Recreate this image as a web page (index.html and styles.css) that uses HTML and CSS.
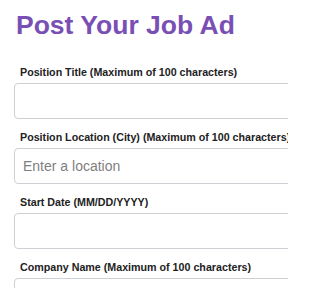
FILE: index.html
```html
<!DOCTYPE html>
<html>
<head>
<meta charset="utf-8">
<link rel="stylesheet" href="styles.css">
</head>
<body>
<div class="page">
  <h1 class="title">Post Your Job Ad</h1>
  <form class="form">
    <div class="field">
      <label class="label">Position Title (Maximum of 100 characters)</label>
      <div class="input"></div>
    </div>
    <div class="field">
      <label class="label">Position Location (City) (Maximum of 100 characters)</label>
      <div class="input"><span class="placeholder">Enter a location</span></div>
    </div>
    <div class="field">
      <label class="label">Start Date (MM/DD/YYYY)</label>
      <div class="input"></div>
    </div>
    <div class="field">
      <label class="label">Company Name (Maximum of 100 characters)</label>
      <div class="input"></div>
    </div>
  </form>
</div>
</body>
</html>
```

FILE: styles.css
```css
html, body {
  margin: 0;
  padding: 0;
  background: #ffffff;
  width: 288px;
  height: 288px;
  overflow: hidden;
}
.page {
  box-sizing: border-box;
  width: 288px;
  height: 288px;
  overflow: hidden;
  padding: 9px 0 0 14px;
  font-family: "Liberation Sans", Arial, sans-serif;
}
.title {
  margin: 0 0 24px 2px;
  font-size: 26.5px;
  line-height: 32px;
  font-weight: bold;
  color: #7a4fb5;
  white-space: nowrap;
}
.form {
  display: flex;
  flex-direction: column;
  gap: 11px;
}
.field {
  display: flex;
  flex-direction: column;
  gap: 4px;
}
.label {
  display: block;
  margin-left: 6px;
  font-size: 10.7px;
  line-height: 14px;
  font-weight: bold;
  color: #222222;
  white-space: nowrap;
}
.input {
  box-sizing: border-box;
  flex: none;
  height: 36px;
  width: 340px;
  border: 1px solid #cfcfd6;
  border-radius: 4px;
  display: flex;
  align-items: center;
  padding-left: 8px;
}
.placeholder {
  font-size: 14px;
  color: #808080;
}
```
